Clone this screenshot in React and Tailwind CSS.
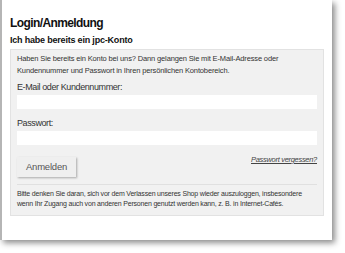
import React from 'react';

const App = () => {
  return (
    <div className="w-[345px] h-[253px] bg-white overflow-hidden font-['Liberation_Sans',Arial,sans-serif] text-[#333]">
      <div className="w-[332px] h-[240px] bg-white border-l-2 border-[#b5b5b5] shadow-[3px_3px_6px_rgba(0,0,0,0.45)] pl-[8px] pt-[16px]">
        <h1 className="text-[12px] leading-[14px] font-bold tracking-[-0.6px] text-[#111]">Login/Anmeldung</h1>
        <h2 className="mt-[5px] text-[9px] leading-[11px] font-bold tracking-[-0.2px] text-[#111]">Ich habe bereits ein jpc-Konto</h2>

        <div className="mt-[3px] w-[314px] bg-[#f1f1f1] border border-[#e2e2e2] px-[6px] pt-[3px] pb-[6px]">
          <p className="text-[7.5px] leading-[12px] tracking-[-0.14px]">
            Haben Sie bereits ein Konto bei uns? Dann gelangen Sie mit E-Mail-Adresse oder Kundennummer und Passwort in Ihren persönlichen Kontobereich.
          </p>

          <label className="block mt-[4px] text-[9px] leading-[12px] tracking-[-0.4px]">E-Mail oder Kundennummer:</label>
          <input type="text" className="block mt-[2px] w-[300px] h-[14px] bg-white outline-none" />

          <label className="block mt-[8px] text-[9px] leading-[12px] tracking-[-0.4px]">Passwort:</label>
          <input type="password" className="block mt-[2px] w-[300px] h-[14px] bg-white outline-none" />

          <div className="mt-[12px] w-[300px] flex items-start justify-between">
            <button className="w-[59px] h-[20px] bg-[#efefef] text-[9.5px] tracking-[-0.2px] text-[#555] shadow-[1px_1px_2px_rgba(0,0,0,0.3)]">
              Anmelden
            </button>
            <a href="#" className="-mt-[2px] text-[7.5px] leading-[10px] italic underline tracking-[-0.3px] text-[#444]">Passwort vergessen?</a>
          </div>

          <div className="mt-[7px] w-[300px] border-t border-[#e0e0e0] pt-[4px]">
            <p className="text-[7px] leading-[10px] tracking-[-0.19px]">
              Bitte denken Sie daran, sich vor dem Verlassen unseres Shop wieder auszuloggen, insbesondere wenn Ihr Zugang auch von anderen Personen genutzt werden kann, z. B. in Internet-Cafés.
            </p>
          </div>
        </div>
      </div>
    </div>
  );
};

export default App;
